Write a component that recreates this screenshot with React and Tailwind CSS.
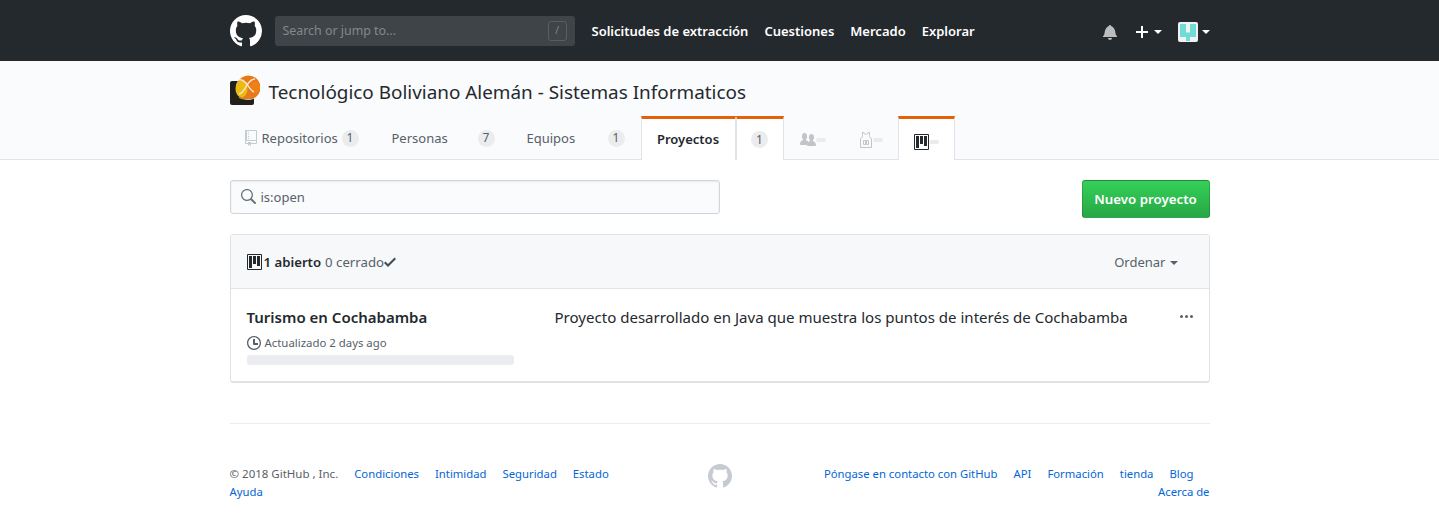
const MARK = 'M8 0C3.58 0 0 3.58 0 8c0 3.54 2.29 6.53 5.47 7.59.4.07.55-.17.55-.38 0-.19-.01-.82-.01-1.49-2.01.37-2.53-.49-2.69-.94-.09-.23-.48-.94-.82-1.13-.28-.15-.68-.52-.01-.53.63-.01 1.08.58 1.23.82.72 1.21 1.87.87 2.33.66.07-.52.28-.87.51-1.07-1.78-.2-3.64-.89-3.64-3.95 0-.87.31-1.59.82-2.15-.08-.2-.36-1.02.08-2.12 0 0 .67-.21 2.2.82.64-.18 1.32-.27 2-.27.68 0 1.36.09 2 .27 1.53-1.04 2.2-.82 2.2-.82.44 1.1.16 1.92.08 2.12.51.56.82 1.27.82 2.15 0 3.07-1.87 3.75-3.65 3.95.29.25.54.73.54 1.48 0 1.07-.01 1.93-.01 2.2 0 .21.15.46.55.38A8.013 8.013 0 0 0 16 8c0-4.42-3.58-8-8-8z';
const PROJECT = 'M10 12h3V2h-3v10zm-4-2h3V2H6v8zm-4 4h3V2H2v12zm-1 1h13V1H1v14zM14 0H1a1 1 0 0 0-1 1v14a1 1 0 0 0 1 1h13a1 1 0 0 0 1-1V1a1 1 0 0 0-1-1z';

function Mark({ className }) {
    return (
        <svg viewBox="0 0 16 16" className={className} fill="currentColor">
            <path fillRule="evenodd" d={MARK} />
        </svg>
    );
}

function ProjectIcon({ className }) {
    return (
        <svg viewBox="0 0 15 16" className={className} fill="currentColor">
            <path fillRule="evenodd" d={PROJECT} />
        </svg>
    );
}

function Caret({ className }) {
    return <span className={`inline-block w-0 h-0 border-x-[4px] border-x-transparent border-t-[4px] ${className}`} />;
}

function Counter({ children }) {
    return (
        <span className="flex h-[17px] w-[17px] items-center justify-center rounded-full bg-[#ebecee] text-xs text-[#586069]">
            {children}
        </span>
    );
}

function OrgLogo() {
    return (
        <svg viewBox="0 0 30 30" className="h-[30px] w-[30px] shrink-0">
            <rect x="0" y="6" width="24" height="24" rx="2" fill="#22201c" />
            <circle cx="18.500" cy="12.500" r="12.500" fill="#fff" />
            <circle cx="18.500" cy="12.500" r="12" fill="#e8791a" />
            <ellipse cx="11.500" cy="14" rx="6" ry="8.500" fill="#ecbb12" />
            <ellipse cx="25" cy="12.500" rx="4.500" ry="6" fill="#ef7f17" />
            <path d="M9 5c3-1 5 1 7 3 3 4 5 8 8 9M25 4c-3 0-6 3-8 6-2 4-4 8-8 9" stroke="#f7e6cf" strokeWidth="1.500" fill="none" />
            <path d="M9 22c5 3 10 2 13-1" stroke="#c98a2b" strokeWidth="1.500" fill="none" />
        </svg>
    );
}

function UserAvatar() {
    return (
        <svg viewBox="0 0 20 20" className="h-5 w-5">
            <rect width="20" height="20" rx="2" fill="#f2f2f2" />
            <path d="M2 2h6v8.500h4V2h6v13h-6v4H8v-4H2z" fill="#6fdcd6" />
        </svg>
    );
}

function Tab({ className, children, selected }) {
    return (
        <div
            className={`flex items-center ${
                selected
                    ? 'h-[44px] border-x border-[#e1e4e8] border-t-[3px] border-t-[#e36209] bg-white'
                    : 'h-[44px]'
            } ${className}`}
        >
            {children}
        </div>
    );
}

const footerLeft = ['Condiciones', 'Intimidad', 'Seguridad', 'Estado'];
const footerRight = ['Póngase en contacto con GitHub', 'API', 'Formación', 'tienda', 'Blog'];

export default function App() {
    return (
        <div className="min-h-[514px] bg-white font-['Noto_Sans',sans-serif] text-sm text-[#24292e]">
            <header className="h-[61px] bg-[#24292e] text-white">
                <div className="mx-auto flex h-full w-[980px] items-center">
                    <Mark className="h-8 w-8 text-white" />
                    <div className="ml-[13px] flex h-[30px] w-[300px] items-center justify-between rounded-[3px] bg-[#3f4448] pl-2 pr-2">
                        <span className="text-[12.400px] text-[#85888b]">Search or jump to...</span>
                        <span className="flex h-5 w-[19px] items-center justify-center rounded-[3px] border border-[#5a5e62] text-[10px] text-[#85888b]">/</span>
                    </div>
                    <nav className="ml-[17px] flex gap-4 pt-[2px] text-[13px] font-semibold">
                        <span>Solicitudes de extracción</span>
                        <span>Cuestiones</span>
                        <span>Mercado</span>
                        <span>Explorar</span>
                    </nav>
                    <div className="ml-auto flex items-center pt-[2px]">
                        <svg viewBox="0 0 14 16" className="h-4 w-[14px] text-[#bcbdbf]" fill="currentColor">
                            <path d="M14 12v1H0v-1l.73-.58c.77-.77.81-2.55 1.19-4.42C2.69 3.23 6 2 6 2c0-.55.45-1 1-1s1 .45 1 1c0 0 3.39 1.23 4.16 5 .38 1.88.42 3.66 1.19 4.42l.66.58H14zm-7 4c1.11 0 2-.89 2-2H5c0 1.11.89 2 2 2z" />
                        </svg>
                        <svg viewBox="0 0 12 12" className="ml-[19px] h-3 w-3 text-white" fill="currentColor">
                            <path d="M12 7H7v5H5V7H0V5h5V0h2v5h5v2z" />
                        </svg>
                        <Caret className="ml-[6px] border-t-white" />
                        <span className="ml-[16px]"><UserAvatar /></span>
                        <Caret className="ml-[4px] border-t-white" />
                    </div>
                </div>
            </header>

            <div className="h-[99px] border-b border-[#e1e4e8] bg-[#fafbfc]">
                <div className="mx-auto w-[980px]">
                    <div className="flex h-[55px] items-start pt-[14px]">
                        <OrgLogo />
                        <h1 className="ml-[9px] text-[18.900px] font-normal leading-[35px] text-[#24292e]">Tecnológico Boliviano Alemán - Sistemas Informaticos</h1>
                    </div>
                    <div className="flex text-[13px] text-[#586069]">
                        <Tab className="w-[147px] pl-[15px]">
                            <svg viewBox="0 0 12 16" className="h-4 w-3 text-[#c6cbd1]" fill="currentColor">
                                <path fillRule="evenodd" d="M4 9H3V8h1v1zm0-3H3v1h1V6zm0-2H3v1h1V4zm0-2H3v1h1V2zm8-1v12c0 .55-.45 1-1 1H6v2l-1.5-1.5L3 16v-2H1c-.55 0-1-.45-1-1V1c0-.55.45-1 1-1h10c.55 0 1 .45 1 1zm-1 10H1v2h2v-1h3v1h5v-2zm0-10H2v9h9V1z" />
                            </svg>
                            <span className="ml-[5px] w-[80px]">Repositorios</span>
                            <Counter>1</Counter>
                        </Tab>
                        <Tab className="w-[135px] pl-[15px]">
                            <span className="w-[86px]">Personas</span>
                            <Counter>7</Counter>
                        </Tab>
                        <Tab className="w-[129px] pl-[15px]">
                            <span className="w-[81px]">Equipos</span>
                            <Counter>1</Counter>
                        </Tab>
                        <Tab selected className="w-[95px] justify-center font-semibold text-[#24292e]">Proyectos</Tab>
                        <Tab selected className="w-[48px] justify-center"><Counter>1</Counter></Tab>
                        <Tab className="w-[57px] pl-4 pt-1">
                            <svg viewBox="0 0 16 16" className="h-4 w-4 text-[#c2c4c7]" fill="currentColor">
                                <path d="M16 12.999c0 .439-.45 1-1 1H7.995c-.539 0-.994-.447-.995-.999H1c-.54 0-1-.561-1-1 0-2.634 3-4 3-4s.229-.409 0-1c-.841-.621-1.058-.59-1-3 .058-2.419 1.367-3 2.5-3s2.442.58 2.5 3c.058 2.41-.159 2.379-1 3-.229.59 0 1 0 1s1.549.711 2.42 2.088C9.196 9.369 10 8.999 10 8.999s.229-.409 0-1c-.841-.62-1.058-.59-1-3 .058-2.419 1.367-3 2.5-3s2.437.581 2.495 3c.059 2.41-.158 2.38-1 3-.229.59 0 1 0 1s3.005 1.366 3.005 4z" />
                            </svg>
                            <span className="h-1 w-[10px] rounded-sm bg-[#e9ebee]" />
                        </Tab>
                        <Tab className="w-[57px] pl-[18px] pt-1">
                            <svg viewBox="0 0 14 16" className="h-4 w-[14px] text-[#c2c4c7]" fill="none" stroke="currentColor" strokeWidth="1">
                                <path d="M3.500.500v3c0 1.500-.500 2.500-2 3v9h11v-9c-1.500-.500-2-1.500-2-3v-3H9c-.500 2.500-3.500 2.500-4 0zM4.500 8.500h2v4h-2zM7.500 8.500h2v4h-2z" />
                            </svg>
                            <span className="h-1 w-[10px] rounded-sm bg-[#e9ebee]" />
                        </Tab>
                        <Tab selected className="w-[57px] pl-[15px] pt-1">
                            <ProjectIcon className="h-4 w-[15px] text-[#24292e]" />
                            <span className="h-1 w-[10px] rounded-sm bg-[#e9ebee]" />
                        </Tab>
                    </div>
                </div>
            </div>

            <main className="mx-auto w-[980px]">
                <div className="mt-[20px] flex items-start justify-between">
                    <div className="flex h-[34px] w-[490px] items-center rounded-[3px] border border-[#d1d5da] bg-[#fafbfc] pl-[9px] shadow-[inset_0_1px_2px_rgba(27,31,35,0.075)]">
                        <svg viewBox="0 0 16 16" className="h-4 w-4 text-[#6a737d]" fill="currentColor">
                            <path fillRule="evenodd" d="M15.7 13.3l-3.81-3.83A5.93 5.93 0 0 0 13 6c0-3.31-2.69-6-6-6S1 2.690 1 6s2.690 6 6 6c1.300 0 2.480-.410 3.470-1.110l3.830 3.810c.190.200.450.300.700.300.250 0 .520-.090.700-.300a.996.996 0 0 0 0-1.410v.010zM7 10.700c-2.590 0-4.700-2.110-4.700-4.700 0-2.590 2.110-4.700 4.700-4.700 2.590 0 4.700 2.110 4.700 4.700 0 2.590-2.110 4.700-4.700 4.700z" />
                        </svg>
                        <span className="ml-[5px] text-[13px] text-[#586069]">is:open</span>
                    </div>
                    <button className="flex h-[38px] w-[128px] items-center justify-center rounded-[3px] border border-[rgba(27,31,35,0.2)] bg-gradient-to-b from-[#34d058] to-[#28a745] text-[13.300px] font-semibold text-white">
                        Nuevo proyecto
                    </button>
                </div>

                <section className="mt-[16px] rounded-[3px] border border-b-2 border-[#dfe2e5]">
                    <div className="flex h-[54px] items-center justify-between border-b border-[#e1e4e8] bg-[#f6f8fa] pl-4 pr-[31px] pt-[2px] text-[13.200px]">
                        <div className="flex items-center">
                            <ProjectIcon className="h-4 w-[15px] text-[#24292e]" />
                            <span className="ml-[2px] font-semibold">1 abierto</span>
                            <span className="ml-1 text-[#586069]">0 cerrado</span>
                            <svg viewBox="0 0 12 16" className="h-4 w-3 text-[#444d56]" fill="currentColor">
                                <path d="M12 5l-8 8-4-4 1.500-1.500L4 10l6.500-6.500L12 5z" />
                            </svg>
                        </div>
                        <div className="flex items-center text-[13px] text-[#586069]">
                            Ordenar
                            <Caret className="ml-1 border-t-[#586069]" />
                        </div>
                    </div>
                    <div className="flex h-[92px] pl-4 pr-4 pt-[16px]">
                        <div className="w-[267px]">
                            <h3 className="text-[15px] font-semibold leading-[24px]">Turismo en Cochabamba</h3>
                            <div className="mt-[6px] flex items-center text-[11.400px] text-[#586069]">
                                <svg viewBox="0 0 14 16" className="h-4 w-[14px]" fill="currentColor">
                                    <path fillRule="evenodd" d="M8 8h3v2H7c-.550 0-1-.450-1-1V4h2v4zM7 2.300c3.140 0 5.700 2.560 5.700 5.700s-2.560 5.700-5.700 5.700A5.710 5.710 0 0 1 1.300 8c0-3.140 2.560-5.700 5.700-5.700zM7 1C3.140 1 0 4.140 0 8s3.140 7 7 7 7-3.140 7-7-3.140-7-7-7z" />
                                </svg>
                                <span className="ml-[4px]">Actualizado 2 days ago</span>
                            </div>
                            <div className="mt-[4px] h-[10px] rounded-[3px] bg-[#eaecef]" />
                        </div>
                        <p className="ml-[41px] flex-1 text-[15.050px] leading-[24px]">Proyecto desarrollado en Java que muestra los puntos de interés de Cochabamba</p>
                        <svg viewBox="0 0 13 16" className="mt-[3px] h-4 w-[13px] text-[#586069]" fill="currentColor">
                            <path d="M1.500 7a1.500 1.500 0 1 0 0 3 1.500 1.500 0 0 0 0-3zm5 0a1.500 1.500 0 1 0 0 3 1.500 1.500 0 0 0 0-3zm5 0a1.500 1.500 0 1 0 0 3 1.500 1.500 0 0 0 0-3z" />
                        </svg>
                    </div>
                </section>

                <footer className="mt-[40px] flex items-start justify-between border-t border-[#eaecef] pt-[40px] text-[11.300px] leading-[18px]">
                    <div className="w-[400px] pt-[1px] text-[#586069]">
                        <span className="mr-4 inline-block whitespace-nowrap text-[11.500px]">© 2018 GitHub , Inc.</span>
                        {footerLeft.map((l) => (
                            <a key={l} className="mr-4 inline-block text-[#0366d6]">{l}</a>
                        ))}
                        <a className="inline-block text-[#0366d6]">Ayuda</a>
                    </div>
                    <Mark className="h-6 w-6 text-[#c6cbd1]" />
                    <div className="w-[400px] pt-[1px] text-right text-[#0366d6]">
                        {footerRight.map((l) => (
                            <a key={l} className="mr-4 inline-block whitespace-nowrap">{l}</a>
                        ))}
                        <a className="inline-block whitespace-nowrap">Acerca de</a>
                    </div>
                </footer>
            </main>
        </div>
    );
}
